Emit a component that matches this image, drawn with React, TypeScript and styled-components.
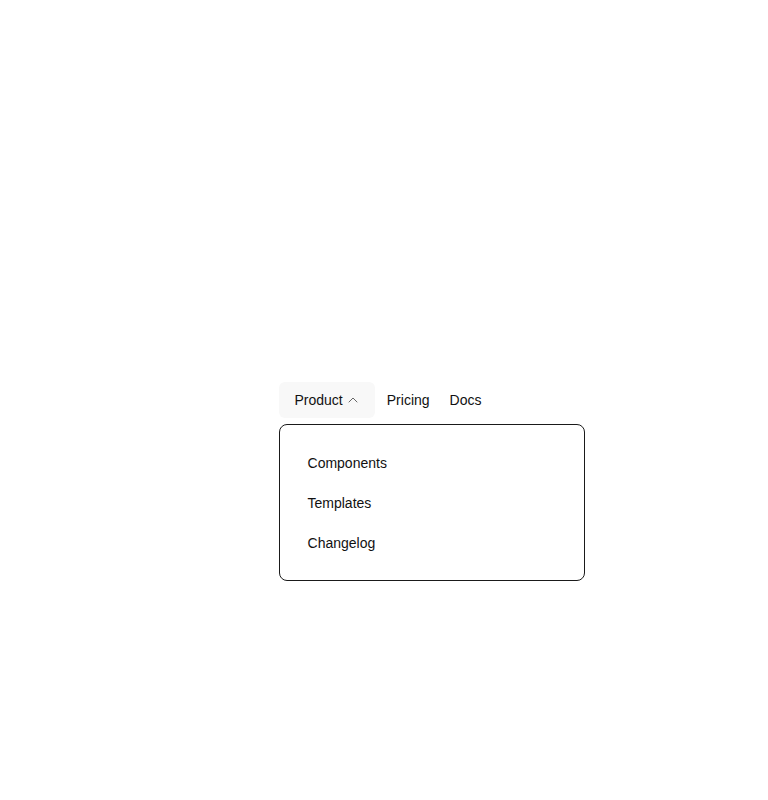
import styled, { createGlobalStyle } from 'styled-components';
import { ChevronUp } from 'lucide-react';

const GlobalStyle = createGlobalStyle`
  html, body {
    margin: 0;
    padding: 0;
    background: #ffffff;
  }
  body {
    font-family: "Liberation Sans", Arial, sans-serif;
    color: #111111;
  }
`;

const Page = styled.div`
  display: flex;
  align-items: center;
  justify-content: center;
  min-height: 800px;
`;

const Nav = styled.nav`
  position: relative;
  display: flex;
  align-items: center;
  gap: 4px;
  height: 36px;
`;

const Trigger = styled.button<{ open?: boolean }>`
  display: flex;
  align-items: center;
  gap: 2px;
  height: 36px;
  padding: 0 14px 0 16px;
  border: none;
  border-radius: 6px;
  background: ${(p) => (p.open ? '#f8f8f8' : 'transparent')};
  font: inherit;
  font-size: 14px;
  color: #111111;
  cursor: pointer;

  svg {
    color: #666666;
  }
`;

const Link = styled.a`
  display: flex;
  align-items: center;
  height: 36px;
  padding: 0 8px;
  font-size: 14px;
  color: #111111;
  text-decoration: none;
`;

const Menu = styled.ul`
  position: absolute;
  top: 42px;
  left: 0;
  width: 306px;
  box-sizing: border-box;
  margin: 0;
  padding: 18px 16px 17px;
  list-style: none;
  border: 1px solid #1a1a1a;
  border-radius: 8px;
  background: #ffffff;
`;

const MenuItem = styled.li`
  display: flex;
  align-items: center;
  height: 40px;
  padding: 0 12px;
  font-size: 14px;
  color: #111111;
`;

const items = ['Components', 'Templates', 'Changelog'];

const App = (): JSX.Element => {
  return (
    <>
      <GlobalStyle />
      <Page>
        <Nav>
          <Trigger open>
            Product
            <ChevronUp size={16} strokeWidth={1.5} />
          </Trigger>
          <Link href="#">Pricing</Link>
          <Link href="#">Docs</Link>
          <Menu>
            {items.map((item) => (
              <MenuItem key={item}>{item}</MenuItem>
            ))}
          </Menu>
        </Nav>
      </Page>
    </>
  );
};

export default App;
